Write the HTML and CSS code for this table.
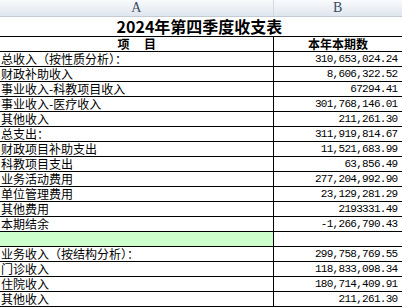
FILE: index.html
```html
<!DOCTYPE html>
<html lang="zh-CN">
<head>
<meta charset="utf-8">
<title>2024年第四季度收支表</title>
<link rel="stylesheet" href="styles.css">
</head>
<body>
<table class="sheet">
  <colgroup><col class="col-a"><col class="col-b"></colgroup>
  <thead>
    <tr class="colhead"><th>A</th><th>B</th></tr>
  </thead>
  <tbody>
    <tr class="title"><td colspan="2">2024年第四季度收支表</td></tr>
    <tr class="head"><td>项　 目</td><td>本年本期数</td></tr>
    <tr><td>总收入（按性质分析）：</td><td class="num">310,653,024.24</td></tr>
    <tr><td>财政补助收入</td><td class="num">8,606,322.52</td></tr>
    <tr><td>事业收入-科教项目收入</td><td class="num">67294.41</td></tr>
    <tr><td>事业收入-医疗收入</td><td class="num">301,768,146.01</td></tr>
    <tr><td>其他收入</td><td class="num">211,261.30</td></tr>
    <tr><td>总支出：</td><td class="num">311,919,814.67</td></tr>
    <tr><td>财政项目补助支出</td><td class="num">11,521,683.99</td></tr>
    <tr><td>科教项目支出</td><td class="num">63,856.49</td></tr>
    <tr><td>业务活动费用</td><td class="num">277,204,992.90</td></tr>
    <tr><td>单位管理费用</td><td class="num">23,129,281.29</td></tr>
    <tr><td>其他费用</td><td class="num">2193331.49</td></tr>
    <tr><td>本期结余</td><td class="num">-1,266,790.43</td></tr>
    <tr class="blank"><td class="green"></td><td></td></tr>
    <tr><td>业务收入（按结构分析）：</td><td class="num">299,758,769.55</td></tr>
    <tr><td>门诊收入</td><td class="num">118,833,098.34</td></tr>
    <tr><td>住院收入</td><td class="num">180,714,409.91</td></tr>
    <tr><td>其他收入</td><td class="num">211,261.30</td></tr>
  </tbody>
</table>
</body>
</html>
```

FILE: styles.css
```css
html, body {
  margin: 0;
  padding: 0;
  background: #ffffff;
}

.sheet {
  border-collapse: collapse;
  table-layout: fixed;
  width: 402px;
  font-family: "Noto Sans CJK SC", "Noto Sans", sans-serif;
  font-size: 12px;
  color: #000000;
}

.col-a { width: 273px; }
.col-b { width: 129px; }

.colhead th {
  height: 16px;
  padding: 0;
  font-family: "Liberation Serif", serif;
  font-weight: normal;
  font-size: 14px;
  line-height: 16px;
  color: #3c4d63;
  background: linear-gradient(#f9fafc, #dfe6ee);
  border-bottom: 1px solid #c4cbd5;
  border-right: 1px solid #d3dae3;
  text-align: center;
}

.colhead th:last-child {
  border-right: none;
}

.sheet td {
  height: 14px;
  padding: 0 0 0 1px;
  line-height: 14px;
  border-bottom: 1px solid #000000;
  white-space: nowrap;
}

.sheet tbody td + td {
  border-left: 1px solid #000000;
  border-right: 1px solid #000000;
}

.title td {
  height: 19px;
  line-height: 19px;
  font-size: 16px;
  font-weight: bold;
  text-align: center;
  padding-left: 0;
  padding-right: 3px;
}

.head td {
  font-weight: bold;
  text-align: center;
}

.num {
  text-align: right;
  font-family: "Liberation Mono", monospace;
  font-size: 11px;
  letter-spacing: -0.7px;
  padding-right: 4px !important;
}

.green {
  background: #ccffcc;
}
```
